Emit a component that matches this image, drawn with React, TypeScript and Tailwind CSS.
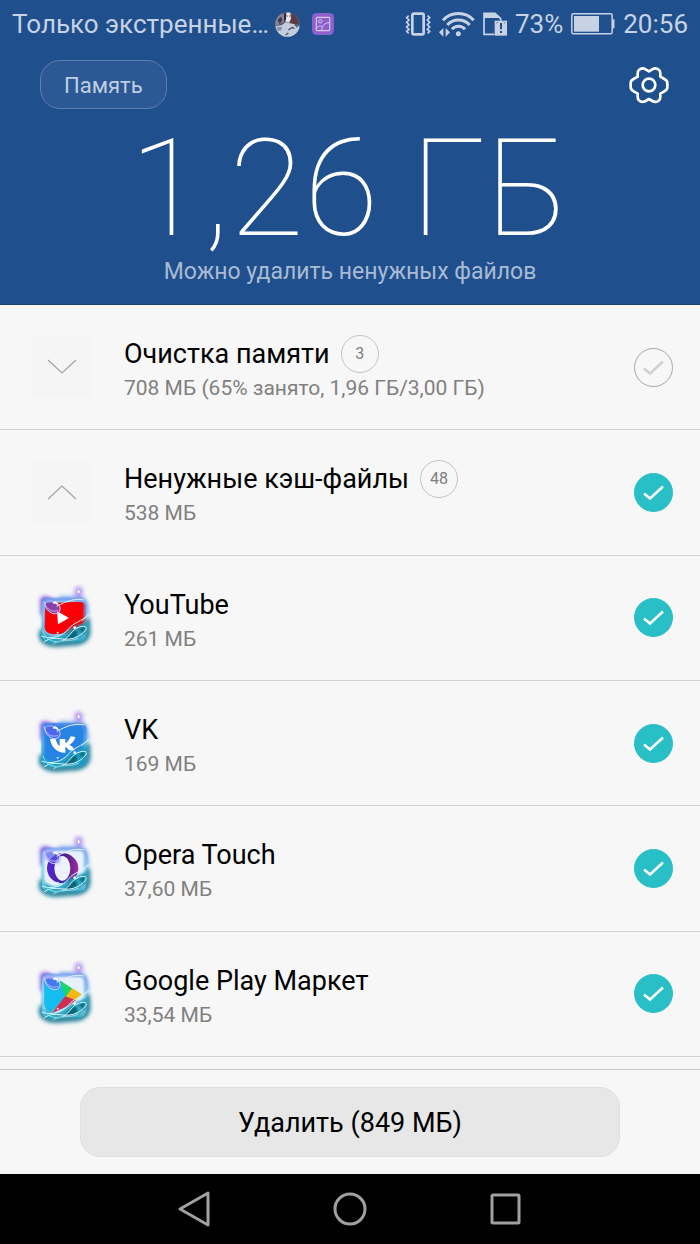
import React, { useState } from "react"

type IconName = "expand" | "collapse" | "youtube" | "vk" | "opera" | "play"

interface CleanupItem {
  id: string
  icon: IconName
  title: string
  detail: string
  count?: number
  selected: boolean
}

const INITIAL_ITEMS: CleanupItem[] = [
  { id: "memory", icon: "expand", title: "Очистка памяти", detail: "708 МБ (65% занято, 1,96 ГБ/3,00 ГБ)", count: 3, selected: false },
  { id: "cache", icon: "collapse", title: "Ненужные кэш-файлы", detail: "538 МБ", count: 48, selected: true },
  { id: "youtube", icon: "youtube", title: "YouTube", detail: "261 МБ", selected: true },
  { id: "vk", icon: "vk", title: "VK", detail: "169 МБ", selected: true },
  { id: "opera", icon: "opera", title: "Opera Touch", detail: "37,60 МБ", selected: true },
  { id: "play", icon: "play", title: "Google Play Маркет", detail: "33,54 МБ", selected: true },
]

function AvatarIcon() {
  return (
    <svg className="size-[25px] shrink-0" viewBox="0 0 75 75" aria-hidden="true">
      <clipPath id="avatar-clip">
        <circle cx="37.500" cy="37.500" r="37" />
      </clipPath>
      <g clipPath="url(#avatar-clip)">
        <rect width="75" height="75" fill="#5b5a6e" />
        <path d="M0 14L20 2L32 8L26 30L10 38L0 40Z" fill="#85839a" />
        <path d="M44 4L62 10L72 34L58 38L46 30Z" fill="#5c3b48" />
        <path d="M8 24l10-10 4 10-8 12z" fill="#3b384c" />
        <path d="M30 2L46 0L48 20L42 32L32 28Z" fill="#e6e8f0" />
        <path d="M27 6L34 0L33 22L27 28Z" fill="#2f2b3c" />
        <path d="M34 12h4M42 12h4" stroke="#50505f" strokeWidth="3" />
        <path d="M0 42L20 40L32 30L44 34L56 36L75 44L72 75L14 75L6 60Z" fill="#c3cddd" />
        <path d="M4 44L22 46L18 56L8 56Z" fill="#8594ad" />
        <path d="M40 54L52 46L58 50M32 69L40 63M60 38L68 46" stroke="#4a5268" strokeWidth="4" fill="none" />
      </g>
    </svg>
  )
}

function GalleryIcon() {
  return (
    <svg className="size-[22px] shrink-0" viewBox="0 0 66 66" fill="none" aria-hidden="true">
      <rect width="66" height="66" rx="14" fill="#8d60cd" />
      <rect x="13" y="13" width="40" height="40" rx="3" stroke="#d9c8f2" strokeWidth="3.500" />
      <circle cx="25" cy="25" r="5" stroke="#d9c8f2" strokeWidth="3" />
      <path d="M53 29C38 29 29 39 29 53M14 46C18 39 26 37 31 42" stroke="#d9c8f2" strokeWidth="3" />
    </svg>
  )
}

function VibrateIcon() {
  return (
    <svg className="h-6 w-[26px]" viewBox="0 0 78 72" fill="none" stroke="#c7d3e4" aria-hidden="true">
      <rect x="22" y="5" width="34" height="62" rx="5" strokeWidth="8" />
      <path d="M11 11L5 17L12 24L5 31L12 38L5 45L12 52L5 58L11 64" strokeWidth="5" />
      <path d="M68 11L74 17L67 24L74 31L67 38L74 45L67 52L74 58L68 64" strokeWidth="5" />
    </svg>
  )
}

function WifiIcon() {
  return (
    <svg className="h-[25px] w-9" viewBox="0 0 108 75" fill="none" stroke="#c7d3e4" aria-hidden="true">
      <path d="M12 25C36-2 80-2 104 25" strokeWidth="9" />
      <path d="M25 39C42 19 74 19 92 39" strokeWidth="9" />
      <path d="M39 52C49 40 68 40 78 52" strokeWidth="9" />
      <circle cx="58" cy="65" r="7.500" fill="#c7d3e4" stroke="none" />
      <path d="M0 61L13 48V74ZM20 48L33 61L20 74Z" fill="#c7d3e4" stroke="none" />
    </svg>
  )
}

function SimAlertIcon() {
  return (
    <svg className="h-6 w-6" viewBox="0 0 72 72" aria-hidden="true">
      <path d="M34 67H3V4H36L53 20V28" fill="none" stroke="#c7d3e4" strokeWidth="5" />
      <path d="M3 3H36L52 18H3Z" fill="#c7d3e4" />
      <rect x="35" y="26" width="37" height="45" fill="#c7d3e4" />
      <path d="M40 34L45 30M62 30L67 34" stroke="#204f8d" strokeWidth="2" />
      <path d="M54 33V52M54 57V63" stroke="#204f8d" strokeWidth="6" />
    </svg>
  )
}

function BatteryIcon() {
  return (
    <svg className="h-[22px] w-11" viewBox="0 0 132 66" fill="none" aria-hidden="true">
      <rect x="2.500" y="2.500" width="121" height="60" rx="5" stroke="#c7d3e4" strokeWidth="4.500" />
      <rect x="9" y="9" width="75" height="47" fill="#c7d3e4" />
      <path d="M127 19V46" stroke="#c7d3e4" strokeWidth="7" />
    </svg>
  )
}

function GearIcon() {
  return (
    <svg className="size-10" viewBox="717 194 120 120" fill="none" stroke="#ffffff" strokeWidth="8" strokeLinejoin="round" aria-hidden="true">
      <path d="M767 207L777 213L787 207Q795 202 803 206L806 208Q811 211 811 220V229L823 236Q832 240 832 248V261Q832 269 823 273L811 280V289Q811 298 806 301L803 303Q795 307 787 302L777 296L767 302Q759 307 751 303L748 301Q743 298 743 289V280L731 273Q722 269 722 261V248Q722 240 731 236L743 229V220Q743 211 748 208L751 206Q759 202 767 207Z" />
      <circle cx="777" cy="254" r="19" />
    </svg>
  )
}

function ChevronIcon({ up }: { up: boolean }) {
  return (
    <span className="flex size-[60px] items-center justify-center bg-[#f5f5f5]">
      <svg className="h-4 w-8" viewBox="0 0 32 16" fill="none" stroke="#a3a3a3" strokeWidth="1.200" aria-hidden="true">
        <path d={up ? "M2 15L16 2L30 15" : "M2 1L16 14L30 1"} />
      </svg>
    </span>
  )
}

function AppGlyph({ name }: { name: IconName }) {
  if (name === "youtube") {
    return (
      <>
        <path d="M60 96Q58 84 70 84L164 80Q181 80 182 96L184 150Q182 174 160 174L84 178Q60 176 58 156Z" fill="#f90006" />
        <path d="M96 108L132 129L99 148Z" fill="#ffffff" />
      </>
    )
  }
  if (name === "vk") {
    return (
      <>
        <rect x="50" y="70" width="134" height="127" rx="18" fill="#2683e3" />
        <path d="M75 117H92C96 132 101 138 104 137V117H121V130C128 128 134 116 137 109L151 111C149 122 141 130 133 135C142 138 147 145 149 151H132C129 145 124 141 121 141V158C96 160 78 139 75 117Z" fill="#ffffff" />
      </>
    )
  }
  if (name === "opera") {
    return (
      <>
        <ellipse cx="113" cy="130" rx="47" ry="45" fill="url(#opera-ring)" />
        <ellipse cx="112" cy="130" rx="24" ry="37" fill="#edf1fb" />
      </>
    )
  }
  return (
    <>
      <path d="M56 86Q82 80 108 92L130 129L80 184Q60 178 57 158Z" fill="#14bff0" />
      <path d="M102 86L143 113L121 138Z" fill="#19d56b" />
      <path d="M142 112L170 130L152 148L121 138Z" fill="#f5b713" />
      <path d="M121 136L153 148L130 164L78 188Z" fill="#d42d4f" />
    </>
  )
}

// Every launcher icon sits in the same frame of glowing water strokes
function AppIcon({ name }: { name: IconName }) {
  return (
    <svg className="h-[68px] w-16" viewBox="21 27 192 204" fill="none" aria-hidden="true">
      <defs>
        <filter id="glow" x="-50%" y="-50%" width="200%" height="200%">
          <feGaussianBlur stdDeviation="6" />
        </filter>
        <filter id="soft" x="-20%" y="-20%" width="140%" height="140%">
          <feGaussianBlur stdDeviation="3" />
        </filter>
        <linearGradient id="frame" x1="0" y1="0" x2="0" y2="1">
          <stop offset="0" stopColor="#5a8fea" />
          <stop offset="0.500" stopColor="#72c8f0" />
          <stop offset="1" stopColor="#1499b6" />
        </linearGradient>
        <linearGradient id="opera-ring" x1="0" y1="0" x2="1" y2="0">
          <stop offset="0" stopColor="#5524d5" />
          <stop offset="0.600" stopColor="#45208f" />
          <stop offset="1" stopColor="#a52b9d" />
        </linearGradient>
      </defs>
      <g filter="url(#glow)">
        <path d="M52 164L50 186Q56 206 92 207L158 202Q184 196 188 174L186 130" stroke="#0f748f" strokeWidth="16" />
        <path d="M54 120V84Q48 68 66 72L100 88" stroke="#6c43db" strokeWidth="13" />
        <ellipse cx="161" cy="50" rx="13" ry="16" fill="#b69af0" />
        <path d="M100 70H168Q186 76 185 122" stroke="#5c8fec" strokeWidth="10" />
      </g>
      <rect x="51" y="71" width="132" height="127" rx="18" fill={name === "youtube" ? "#a4c8f2" : "#e6f1fc"} />
      <AppGlyph name={name} />
      <rect x="53" y="73" width="128" height="123" rx="17" stroke="url(#frame)" strokeWidth="7" filter="url(#soft)" />
      <g filter="url(#soft)">
        <path d="M58 82Q78 72 96 84Q112 100 100 114Q76 118 62 100Z" fill="#5a5cf0" opacity="0.700" />
        <path d="M54 168Q80 190 104 182Q128 164 148 156L188 138Q190 178 162 196L78 201Q56 198 54 168Z" fill="#1fa3be" opacity="0.900" />
        <path d="M146 166Q160 164 156 184Q134 200 116 194Z" fill="#0b6378" />
        <path d="M160 162L180 150L178 178Z" fill="#0d7184" />
      </g>
      <g stroke="#d5f4ff" strokeWidth="3" strokeLinecap="round">
        <path d="M57 80C60 106 82 122 98 114C112 106 104 82 88 80" stroke="#dcd8ff" />
        <path d="M92 82C70 72 56 80 62 92C72 108 86 112 98 106" stroke="#b9b4ff" />
        <path d="M96 94C122 78 154 68 177 75" stroke="#e3edff" />
        <path d="M51 184C78 194 116 184 132 160C145 144 168 140 192 118" />
        <path d="M58 200C90 176 120 206 160 184C192 164 190 148 164 156C140 162 134 188 114 196" />
        <path d="M86 206C110 190 134 202 160 190M170 138C178 130 186 126 188 120" strokeWidth="2" />
        <path d="M54 168C60 188 72 198 94 200" stroke="#73e4f2" />
      </g>
      <path d="M84 82Q94 76 99 86L97 92Q94 84 84 86Z" fill="#ffffff" />
      <ellipse cx="161" cy="50" rx="3" ry="5" fill="#ffffff" />
      <circle cx="98" cy="173" r="3" fill="#b8f6ff" />
      <circle cx="149" cy="158" r="4" fill="#ffffff" />
    </svg>
  )
}

function StatusBar() {
  return (
    <div className="flex h-12 items-center justify-between px-3 text-[26px] text-[#c7d3e4]">
      <div className="flex items-center">
        <span>Только экстренные…</span>
        <span className="ml-1.5 flex items-center gap-3">
          <AvatarIcon />
          <GalleryIcon />
        </span>
      </div>
      <div className="flex items-center gap-2">
        <VibrateIcon />
        <WifiIcon />
        <SimAlertIcon />
        <span>73%</span>
        <BatteryIcon />
        <span>20:56</span>
      </div>
    </div>
  )
}

interface CleanupRowProps {
  item: CleanupItem
  onToggle: (id: string) => void
}

function CleanupRow({ item, onToggle }: CleanupRowProps) {
  const isGroup = item.icon === "expand" || item.icon === "collapse"

  return (
    <li className="border-b border-[#d3d3d3]">
      <label className="flex h-full cursor-pointer items-center pr-[27px] pl-8">
        <span className="w-16 shrink-0">
          {isGroup ? <ChevronIcon up={item.icon === "collapse"} /> : <AppIcon name={item.icon} />}
        </span>
        <span className="ml-7 min-w-0 flex-1 pt-1">
          <span className="flex h-[38px] items-center gap-[11px] text-[27px] text-black">
            {item.title}
            {item.count !== undefined && (
              <span className="flex size-[38px] items-center justify-center rounded-full border border-[#c4c4c4] text-base text-[#808080]">
                {item.count}
              </span>
            )}
          </span>
          <span className="block text-[21px] leading-[30px] text-[#808080]">{item.detail}</span>
        </span>
        <span className="grid shrink-0">
          <input
            type="checkbox"
            checked={item.selected}
            onChange={() => onToggle(item.id)}
            className="peer col-start-1 row-start-1 size-[39px] cursor-pointer appearance-none rounded-full border border-[#a8a8a8] checked:border-[#29bfc7] checked:bg-[#29bfc7]"
          />
          <svg
            className="pointer-events-none col-start-1 row-start-1 size-[39px] stroke-[#d0d0d0] peer-checked:stroke-white"
            viewBox="0 0 39 39"
            fill="none"
            strokeWidth="2.500"
            aria-hidden="true"
          >
            <path d="M10 20.500L16 25.500L29 13.500" />
          </svg>
        </span>
      </label>
    </li>
  )
}

function NavBar() {
  return (
    <nav className="flex h-[70px] items-center justify-center bg-black">
      <button type="button" aria-label="Назад" className="flex w-[155px] justify-center">
        <svg className="size-10" viewBox="0 0 40 40" fill="none" stroke="#a0a0a0" strokeWidth="3" strokeLinejoin="round">
          <path d="M33 4V36L5 20Z" />
        </svg>
      </button>
      <button type="button" aria-label="Домой" className="flex w-[155px] justify-center">
        <svg className="size-10" viewBox="0 0 40 40" fill="none" stroke="#a0a0a0" strokeWidth="3">
          <circle cx="20" cy="20" r="15" />
        </svg>
      </button>
      <button type="button" aria-label="Недавние" className="flex w-[155px] justify-center">
        <svg className="size-10" viewBox="0 0 40 40" fill="none" stroke="#a0a0a0" strokeWidth="3">
          <rect x="7" y="6" width="27" height="28" rx="1" />
        </svg>
      </button>
    </nav>
  )
}

export default function App() {
  const [items, setItems] = useState(INITIAL_ITEMS)

  const toggle = (id: string) => {
    setItems((prev) => prev.map((item) => (item.id === id ? { ...item, selected: !item.selected } : item)))
  }

  return (
    <div className="flex min-h-screen flex-col bg-[#f7f7f7] font-[Roboto,sans-serif]">
      <header className="border-b border-[#174078] bg-[#204f8d] pb-[17px]">
        <StatusBar />
        <div className="flex items-center justify-between pt-3 pr-[31px] pl-10">
          <button
            type="button"
            className="h-[49px] rounded-[20px] border border-[#5b7fae] bg-[#2c5995] px-[23px] pt-0.5 text-[22px] text-[#c1cee0]"
          >
            Память
          </button>
          <button type="button" aria-label="Настройки">
            <GearIcon />
          </button>
        </div>
        <h1 className="pt-3 text-center text-[136px] leading-[136px] font-thin text-white">1,26 ГБ</h1>
        <p className="text-center text-[23px] leading-[30px] text-[#a9bbd4]">Можно удалить ненужных файлов</p>
      </header>

      <main className="flex flex-1 flex-col pb-3">
        <ul className="grid flex-1 auto-rows-fr">
          {items.map((item) => (
            <CleanupRow key={item.id} item={item} onToggle={toggle} />
          ))}
        </ul>
      </main>

      <footer className="border-t border-[#c5c8c8] px-20 py-[17px]">
        <button
          type="button"
          className="h-[70px] w-full rounded-[20px] border border-[#dfdfdf] bg-[#e7e7e7] pt-0.5 text-[27px] text-black"
        >
          Удалить (849 МБ)
        </button>
      </footer>

      <NavBar />
    </div>
  )
}
